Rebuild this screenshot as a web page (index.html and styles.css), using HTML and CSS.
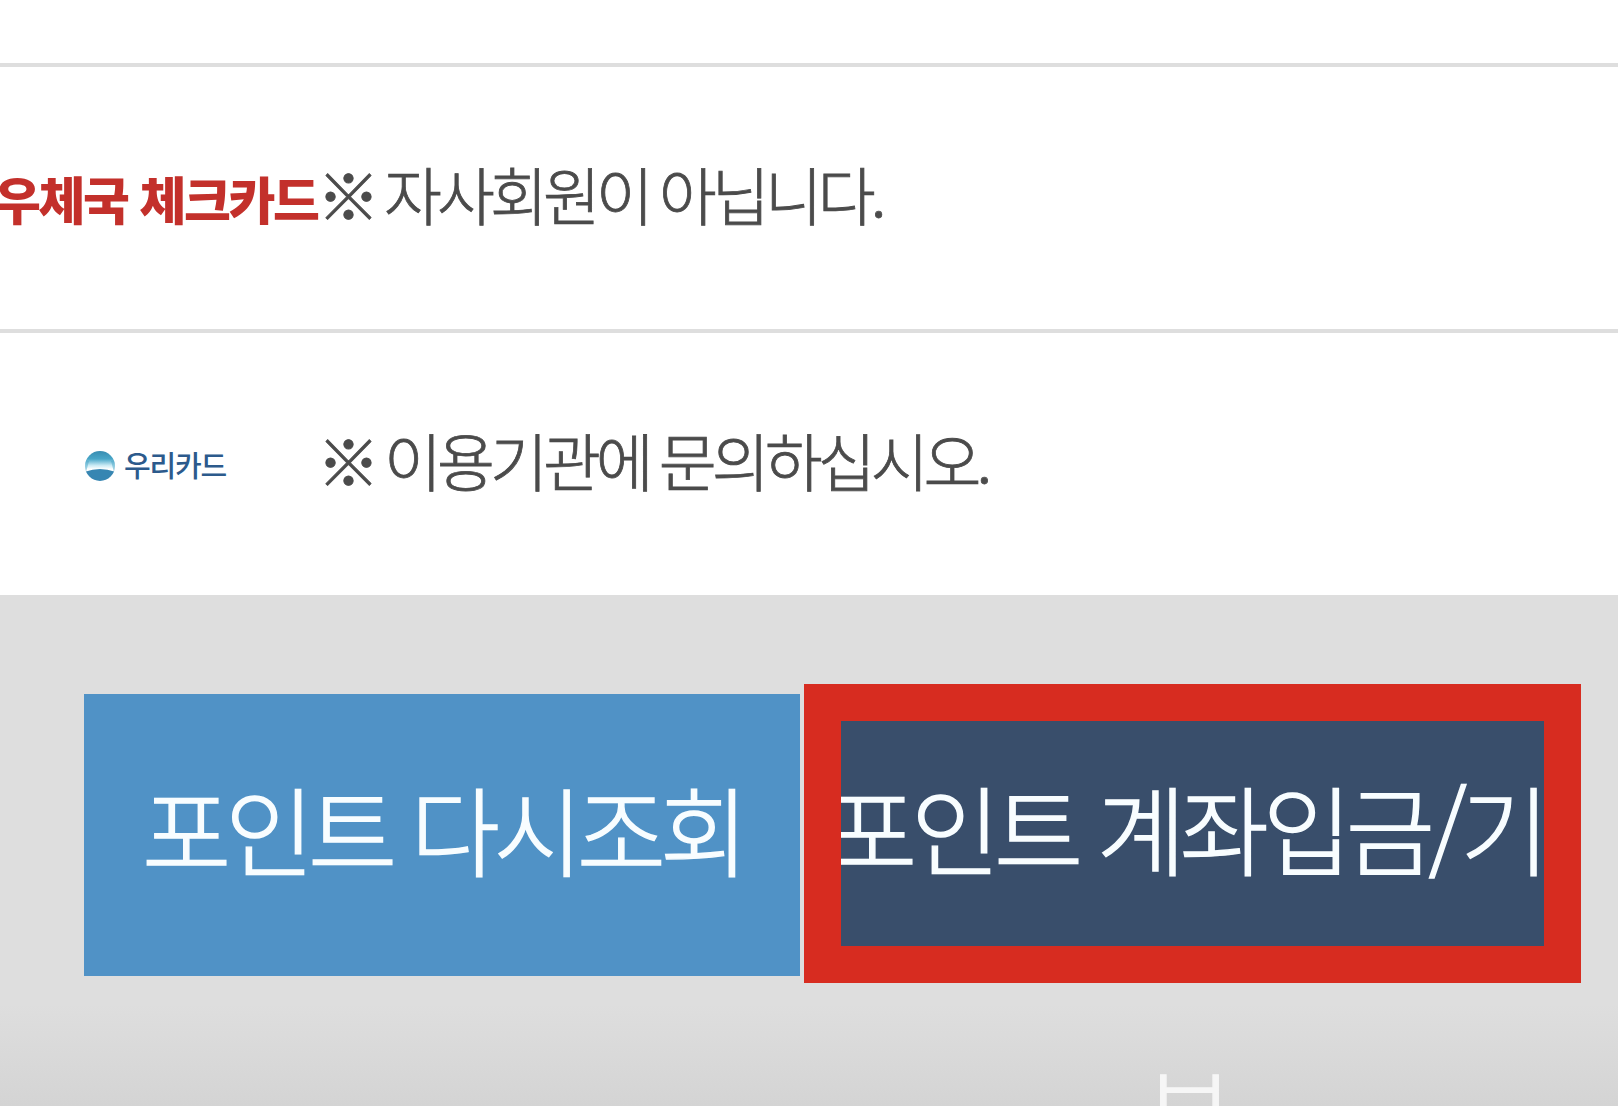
FILE: index.html
```html
<!DOCTYPE html>
<html lang="ko">
	<head>
		<meta charset="UTF-8">
		<title>포인트 조회</title>
		<link rel="stylesheet" href="styles.css">
	</head>
	<body>
		<div id="wrap">
			<ul id="list">
				<li class="blank"></li>
				<li>
					<div class="logo post"><b>우체국</b> <b>체크카드</b></div>
					<p><i>※</i><span class="word">자사회원이</span><span>아닙니다.</span></p>
				</li>
				<li class="last">
					<div class="logo woori">
						<svg width="32" height="32" viewBox="0 0 32 32">
							<defs>
								<linearGradient id="sky" x1="0" y1="0" x2="0" y2="1">
									<stop offset="0" stop-color="#3589ae"/>
									<stop offset="0.28" stop-color="#48a6c8"/>
									<stop offset="0.48" stop-color="#c9eaf4"/>
									<stop offset="0.6" stop-color="#fff"/>
								</linearGradient>
								<clipPath id="ball"><circle cx="16" cy="16" r="15"/></clipPath>
							</defs>
							<g clip-path="url(#ball)">
								<rect width="32" height="32" fill="url(#sky)"/>
								<path d="M0 10Q2 15 0 22L2 22Q4 15 5 11Z" fill="#48a6c8" opacity=".5"/>
								<path d="M32 10Q30 15 32 22L30 22Q28 15 27 11Z" fill="#48a6c8" opacity=".5"/>
								<path d="M0 22Q16 16 32 22L32 32L0 32Z" fill="#3786b2"/>
							</g>
						</svg>
						<span>우리카드</span>
					</div>
					<p><i>※</i><span class="word">이용기관에</span><span>문의하십시오.</span></p>
				</li>
			</ul>
			<div id="btns">
				<a href="javascript:" class="again"><span>포인트</span><span>다시조회</span></a>
				<a href="javascript:" class="give"><span>포인트</span><span>계좌입금/기</span></a>
				<em>부</em>
			</div>
		</div>
	</body>
</html>
```
FILE: styles.css
```css
*{box-sizing: border-box;}
body{margin: 0; background: #fff; font-family: "Noto Sans CJK KR", sans-serif; font-weight: 300; overflow: hidden;}
a{text-decoration: none;}
i,em{font-style: normal;}
ul{padding: 0; margin: 0;}
li{list-style: none; display: flex; align-items: center; height: 266px; border-bottom: 4px solid #dedede;}
#wrap{width: 1618px; height: 1106px; overflow: hidden; display: flex; flex-direction: column;}
#list .blank{height: 67px;}
#list .last{height: 262px; border: 0;}
.logo{width: 317px; flex: none; white-space: nowrap;}
.post{color: #c3302b; font-size: 51px; letter-spacing: -2.4px; text-indent: -6px;}
.post b{font-weight: 800;}
.woori{display: flex; align-items: center; padding: 3px 0 0 84px; color: #2c5a8c; font-size: 29px; font-weight: 500; letter-spacing: -1.2px;}
.woori span{margin: -3px 0 0 8px;}
p{margin: 0; padding-bottom: 11px; color: #4b4b4b; font-size: 63px; letter-spacing: -5px; white-space: nowrap; display: flex; -webkit-text-stroke: 0.8px #4b4b4b;}
p i{width: 67px;}
p .word{margin-right: 10px;}
#btns{flex: 1; background: linear-gradient(#dedede 80%,#d4d4d4); padding: 89px 0 0 84px; display: flex; align-items: flex-start; position: relative;}
#btns a{display: flex; color: #f8fdff; font-size: 97px; letter-spacing: -6.3px; white-space: nowrap; gap: 20px; -webkit-text-stroke: 1.4px #f8fdff;}
#btns .again{width: 716px; height: 282px; margin: 10px 4px 0 0; padding-left: 58px; background: #5092c6; line-height: 265px;}
#btns .give{width: 777px; height: 299px; background: #394e6b; border: 37px solid #d72c20; line-height: 210px; overflow: hidden;}
#btns .give span:first-child{margin-left: -13px;}
#btns em{position: absolute; left: 1145px; top: 443px; color: #f6f6f6; font-size: 97px; -webkit-text-stroke: 1.4px #f6f6f6;}
```
